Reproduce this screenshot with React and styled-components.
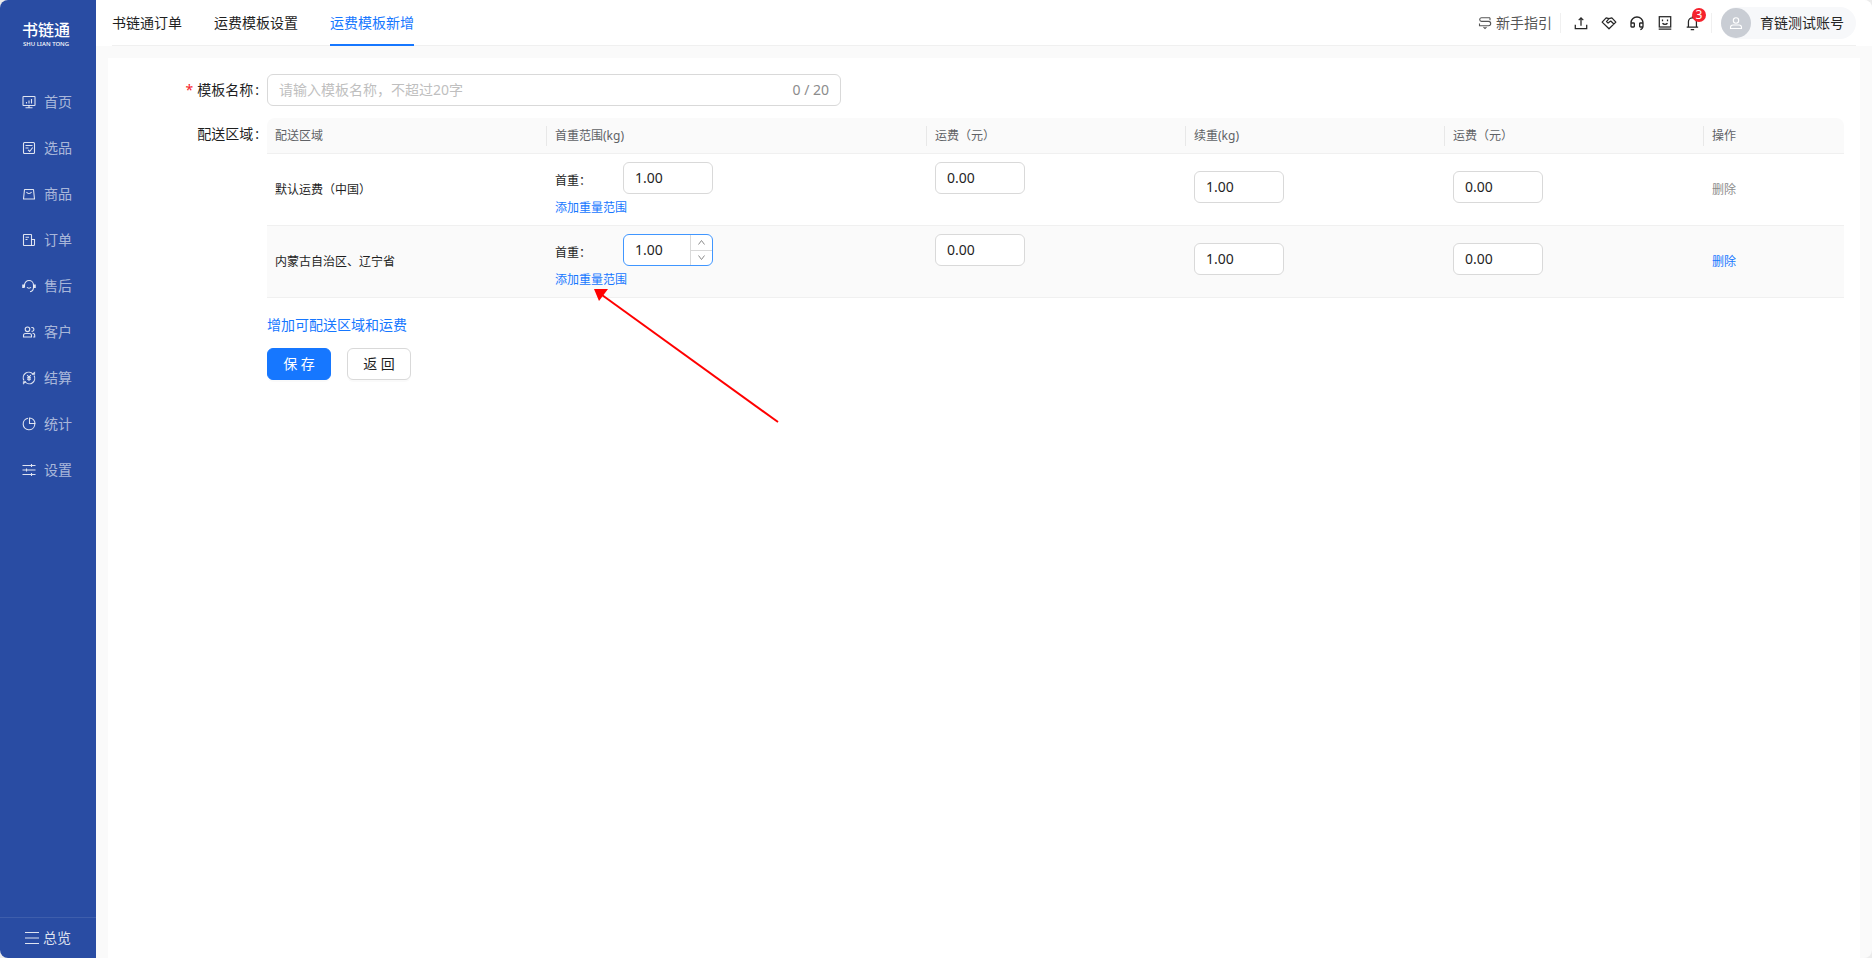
import React, { useState } from 'react';
import styled, { createGlobalStyle } from 'styled-components';
import { RiCustomerServiceLine } from 'react-icons/ri';

const GlobalStyle = createGlobalStyle`
    *, *::before, *::after {
        box-sizing: border-box;
    }
    body {
        margin: 0;
        background: #ececec;
        color: #1f1f1f;
        font-family: "Noto Sans", "Noto Sans CJK SC", sans-serif;
        font-size: 14px;
        line-height: 22px;
    }
    button, input {
        font: inherit;
        color: inherit;
    }
    a {
        text-decoration: none;
    }
`;

const Shell = styled.div`
    display: flex;
    min-height: 100vh;
    border-radius: 8px;
    overflow: hidden;
    background: #fafafa;
`;

/* sidebar */

const Sidebar = styled.aside`
    display: flex;
    flex-direction: column;
    flex: none;
    width: 96px;
    background: #294ca3;
`;

const Brand = styled.div`
    height: 79px;
    padding: 20px 4px 0 0;
    text-align: center;
    color: #fff;
`;

const BrandName = styled.div`
    font-size: 16px;
    font-weight: 500;
    line-height: 21px;
`;

const BrandSub = styled.div`
    font-size: 6px;
    font-weight: 500;
    line-height: 6px;
`;

const Menu = styled.nav`
    display: flex;
    flex-direction: column;
    flex: 1;
`;

const MenuItem = styled.a`
    display: flex;
    align-items: center;
    gap: 8px;
    height: 46px;
    padding-left: 22px;
    color: rgba(255, 255, 255, 0.62);

    svg {
        color: rgba(255, 255, 255, 0.85);
    }
`;

const Overview = styled.button`
    display: flex;
    align-items: center;
    gap: 4px;
    height: 41px;
    padding: 0 0 0 25px;
    border: 0;
    border-top: 1px solid #3e5eac;
    background: none;
    color: rgba(255, 255, 255, 0.85);
`;

/* top bar */

const Main = styled.div`
    display: flex;
    flex-direction: column;
    flex: 1;
    min-width: 0;
`;

const TopBar = styled.header`
    padding: 0 16px;
    background: #fff;
`;

const TopBarInner = styled.div`
    display: flex;
    justify-content: space-between;
    height: 46px;
    border-bottom: 1px solid #f0f0f0;
`;

const Tabs = styled.nav`
    display: flex;
    gap: 32px;
`;

const Tab = styled.a`
    height: 46px;
    padding-top: 12px;
    color: ${({ $active }) => ($active ? '#1677ff' : '#1f1f1f')};
    border-bottom: 2px solid ${({ $active }) => ($active ? '#1677ff' : 'transparent')};
`;

const Tools = styled.div`
    display: flex;
    align-items: center;
`;

const Guide = styled.a`
    display: flex;
    align-items: center;
    gap: 4px;
    padding-right: 8px;
    color: #555;
`;

const Divider = styled.span`
    width: 1px;
    height: 20px;
    background: #f0f0f0;
`;

const ToolList = styled.div`
    display: flex;
    gap: 12px;
    padding: 0 10px 0 12px;
`;

const ToolButton = styled.button`
    position: relative;
    display: flex;
    padding: 0;
    border: 0;
    background: none;
    color: #262626;
`;

const Badge = styled.span`
    position: absolute;
    top: -7px;
    right: -5px;
    width: 14px;
    height: 14px;
    border-radius: 7px;
    background: #f5222d;
    color: #fff;
    font-size: 12px;
    line-height: 14px;
    text-align: center;
`;

const Account = styled.button`
    display: flex;
    align-items: center;
    gap: 9px;
    height: 32px;
    margin-left: 9px;
    padding: 0 12px 0 0;
    border: 0;
    border-radius: 16px;
    background: #f7f8fa;
    color: #262626;
`;

const Avatar = styled.span`
    display: flex;
    align-items: center;
    justify-content: center;
    width: 30px;
    height: 30px;
    border-radius: 50%;
    background: #c9cdd4;
    color: #fff;
`;

/* form */

const Panel = styled.main`
    position: relative;
    flex: 1;
    margin: 12px 12px 0;
    padding: 16px 16px 40px 0;
    background: #fff;
`;

const Field = styled.div`
    display: flex;
    gap: 8px;
    margin-bottom: 12px;
`;

const FieldLabel = styled.label`
    flex: none;
    width: 151px;
    line-height: 32px;
    text-align: right;

    &::before {
        content: ${({ $required }) => ($required ? '"*"' : 'none')};
        margin-right: 4px;
        color: #f5222d;
    }
`;

const Colon = styled.span`
    margin-left: 2px;
`;

const FieldBody = styled.div`
    flex: 1;
    min-width: 0;
`;

const NameBox = styled.div`
    display: flex;
    align-items: center;
    width: 574px;
    height: 32px;
    padding: 0 11px;
    border: 1px solid #d9d9d9;
    border-radius: 6px;
    color: #8c8c8c;
`;

const NameInput = styled.input`
    flex: 1;
    min-width: 0;
    padding: 0;
    border: 0;
    outline: 0;
    color: #1f1f1f;

    &::placeholder {
        color: #bfbfbf;
    }
`;

const Table = styled.table`
    width: 100%;
    table-layout: fixed;
    border-collapse: separate;
    border-spacing: 0;
    font-size: 12px;
`;

const HeadCell = styled.th`
    position: relative;
    height: 36px;
    padding: 0 8px;
    border-bottom: 1px solid #f0f0f0;
    background: #fafafa;
    color: #606266;
    font-weight: 400;
    text-align: left;

    &:first-child {
        border-top-left-radius: 8px;
    }
    &:last-child {
        border-top-right-radius: 8px;
    }
    &:not(:last-child)::after {
        content: "";
        position: absolute;
        top: 8px;
        right: 0;
        width: 1px;
        height: 20px;
        background: #e8e8e8;
    }
`;

const Row = styled.tr`
    background: ${({ $hover }) => ($hover ? '#fafafa' : '#fff')};
`;

const Cell = styled.td`
    height: 72px;
    padding: 8px 8px ${({ $top }) => ($top ? '6px' : '8px')};
    border-bottom: 1px solid #f0f0f0;
    vertical-align: ${({ $top }) => ($top ? 'top' : 'middle')};
`;

const WeightLine = styled.div`
    display: flex;
    margin-bottom: 3px;
`;

const WeightLabel = styled.label`
    width: 68px;
    padding-top: 8px;
`;

const NumberBox = styled.div`
    display: flex;
    width: 90px;
    height: 32px;
    margin-bottom: ${({ $gap }) => ($gap ? '6px' : '0')};
    border: 1px solid ${({ $focused }) => ($focused ? '#4096ff' : '#d9d9d9')};
    border-radius: 6px;
    background: #fff;
    overflow: hidden;
`;

const NumberInput = styled.input`
    flex: 1;
    min-width: 0;
    padding: 0 11px;
    border: 0;
    outline: 0;
    background: none;
    font-size: 14px;
`;

const Stepper = styled.div`
    display: flex;
    flex-direction: column;
    width: 22px;
    border-left: 1px solid #d9d9d9;
`;

const StepButton = styled.button`
    display: flex;
    align-items: center;
    justify-content: center;
    flex: 1;
    padding: 0;
    border: 0;
    background: none;
    color: #8c8c8c;

    & + & {
        border-top: 1px solid #d9d9d9;
    }
`;

const LinkButton = styled.button`
    display: block;
    padding: 0;
    border: 0;
    background: none;
    color: #1677ff;

    &:disabled {
        color: #8c8c8c;
    }
`;

const AddRegion = styled.div`
    padding: 16px 0 12px;
`;

const Actions = styled.div`
    display: flex;
    gap: 16px;
`;

const Button = styled.button`
    width: 64px;
    height: 32px;
    padding: 0;
    border: 1px solid ${({ $primary }) => ($primary ? '#1677ff' : '#d9d9d9')};
    border-radius: 6px;
    background: ${({ $primary }) => ($primary ? '#1677ff' : '#fff')};
    color: ${({ $primary }) => ($primary ? '#fff' : '#1f1f1f')};
    box-shadow: 0 2px 0 rgba(0, 0, 0, 0.02);
`;

const Pointer = styled.svg`
    position: absolute;
    top: 228px;
    left: 484px;
    pointer-events: none;
`;

const Icon = ({ size = 14, children }) => (
    <svg width={size} height={size} viewBox="0 0 14 14" fill="none" stroke="currentColor" strokeWidth="1.1" aria-hidden="true">
        {children}
    </svg>
);

const menu = [
    { label: '首页', icon: <><rect x="1" y="1.5" width="12" height="9" rx="0.6" /><path d="M4.5 8.5V7M7 8.5V5.5M9.5 8.5V4M7 10.5v2M3.5 12.8h7" /></> },
    { label: '选品', icon: <><rect x="1.5" y="1.5" width="11" height="11" rx="1" /><path d="M3.5 4.5h7M3.5 7h3M6 8.8l1.7 1.7 3-4" /></> },
    { label: '商品', icon: <><path d="M2.5 2.5h9l1 9.5h-11z" strokeLinejoin="round" /><path d="M4.5 5c1 2 4 2 5 0" /></> },
    { label: '订单', icon: <><path d="M9.5 12.5H2a.5.5 0 0 1-.5-.5V2a.5.5 0 0 1 .5-.5h7a.5.5 0 0 1 .5.5z" /><path d="M9.5 6.5h3v5a1 1 0 0 1-1 1h-2M3.5 4.2h3.5M3.5 6.5h2" /></> },
    { label: '售后', icon: <><path d="M2.5 8.5V6a4.5 4.5 0 0 1 9 0v2.5c0 2-1 3.7-3.5 4.2" /><path d="M1.3 5.5v3.5M12.7 5.5v3.5" strokeWidth="2.2" /><path d="M5 8.3c.8 1.2 3.2 1.2 4 0" /></> },
    { label: '客户', icon: <><circle cx="5.5" cy="4.3" r="2.3" /><path d="M1.5 12v-1.5c0-1.3 1-2 2-2h4c1 0 2 .7 2 2V12z" /><path d="M9.3 2.6a1.9 1.9 0 1 1 .2 3.6M10.5 8.3c1.3 0 2.2.8 2.2 2V12h-1.5" /></> },
    { label: '结算', icon: <><path d="M2 9.5A5.5 5.5 0 0 1 10.8 3M12 4.5A5.5 5.5 0 0 1 3.2 11" /><path d="M10 3.5h2.7V.8zM4 10.5H1.3v2.7z" fill="currentColor" strokeWidth="0.5" /><path d="M5.2 4L7 6.3 8.8 4M7 6.3V10M5 6.7h4M5 8.3h4" /></> },
    { label: '统计', icon: <><path d="M6 1.3A5.8 5.8 0 1 0 12.7 8" /><path d="M7.5 1v5.5H13A5.5 5.5 0 0 0 7.5 1z" /><path d="M12.7 8V6.5" /></> },
    { label: '设置', icon: <path d="M.5 2.5h13M.5 7h13M.5 11.5h13M9.5 1v3M4.5 5.5v3M9.5 10v3" /> },
];

const tools = [
    { label: '上传', icon: <Icon size={16}><path d="M7 9.5V2.5M5 4.5l2-2 2 2M2 8.5v3.5h10V8.5" /></Icon> },
    { label: '合作', icon: <Icon size={16}><path d="M7 3.2L4.5 2.5 1 6.2l6 5.8 6-5.8-3.5-3.7L7 3.2 4.8 5.8l1.4 1.3 2.3-1.8 2.8 2.6" strokeLinejoin="round" /></Icon> },
    { label: '客服', icon: <RiCustomerServiceLine size={16} /> },
    { label: '反馈', icon: <Icon size={16}><rect x="2" y="1.5" width="10" height="9" /><path d="M4.8 4v1.5M9.2 4v1.5M4.8 7.2c1 1.2 3.4 1.2 4.4 0M1.5 12.3h11" /></Icon> },
    { label: '消息', icon: <Icon size={16}><path d="M1.5 10.7h10M3 10.7V6a3.5 3.5 0 0 1 7 0v4.7M6.5 2.5V1.2M5 12.7h3" /></Icon>, badge: 3 },
];

const regions = [
    { name: '默认运费（中国）', locked: true },
    { name: '内蒙古自治区、辽宁省', focused: true },
];

const NumberField = ({ id, label, value, focused, gap }) => (
    <NumberBox $focused={focused} $gap={gap}>
        <NumberInput id={id} aria-label={label} defaultValue={value} />
        {focused && (
            <Stepper>
                <StepButton aria-label="增加">
                    <svg width="7" height="5" viewBox="0 0 7 5" fill="none" stroke="currentColor"><path d="M.5 4.5l3-4 3 4" /></svg>
                </StepButton>
                <StepButton aria-label="减少">
                    <svg width="7" height="5" viewBox="0 0 7 5" fill="none" stroke="currentColor"><path d="M.5.5l3 4 3-4" /></svg>
                </StepButton>
            </Stepper>
        )}
    </NumberBox>
);

const RegionRow = ({ region, index }) => (
    <Row $hover={region.focused}>
        <Cell>{region.name}</Cell>
        <Cell $top>
            <WeightLine>
                <WeightLabel htmlFor={`weight-${index}`}>首重：</WeightLabel>
                <NumberField id={`weight-${index}`} value="1.00" focused={region.focused} />
            </WeightLine>
            <LinkButton>添加重量范围</LinkButton>
        </Cell>
        <Cell $top><NumberField label="首重运费" value="0.00" /></Cell>
        <Cell><NumberField label="续重" value="1.00" gap /></Cell>
        <Cell><NumberField label="续重运费" value="0.00" gap /></Cell>
        <Cell><LinkButton disabled={region.locked}>删除</LinkButton></Cell>
    </Row>
);

const App = () => {
    const [name, setName] = useState('');

    return (
        <>
            <GlobalStyle />
            <Shell>
                <Sidebar>
                    <Brand>
                        <BrandName>书链通</BrandName>
                        <BrandSub>SHU LIAN TONG</BrandSub>
                    </Brand>
                    <Menu>
                        {menu.map((item) => (
                            <MenuItem key={item.label} href="#">
                                <Icon>{item.icon}</Icon>
                                {item.label}
                            </MenuItem>
                        ))}
                    </Menu>
                    <Overview>
                        <Icon><path d="M0 1.5h14M0 7h14M0 12.5h14" /></Icon>
                        总览
                    </Overview>
                </Sidebar>
                <Main>
                    <TopBar>
                        <TopBarInner>
                            <Tabs>
                                <Tab href="#">书链通订单</Tab>
                                <Tab href="#">运费模板设置</Tab>
                                <Tab href="#" $active>运费模板新增</Tab>
                            </Tabs>
                            <Tools>
                                <Guide href="#">
                                    <Icon>
                                        <path d="M12 1.8H3.5a1.8 1.8 0 0 0 0 3.6h7a2.2 2.2 0 0 1 0 4.4H1.5V7.6M12 1.8v2.4M3.5 5.4h7M5.5 11.2l1.5 1.3 1.5-1.3" />
                                    </Icon>
                                    新手指引
                                </Guide>
                                <Divider />
                                <ToolList>
                                    {tools.map((tool) => (
                                        <ToolButton key={tool.label} aria-label={tool.label}>
                                            {tool.icon}
                                            {tool.badge && <Badge>{tool.badge}</Badge>}
                                        </ToolButton>
                                    ))}
                                </ToolList>
                                <Divider />
                                <Account>
                                    <Avatar>
                                        <Icon><circle cx="7" cy="4.5" r="2.7" /><path d="M1.5 12.5v-1c0-1.6 1.2-2.5 2.5-2.5h6c1.3 0 2.5.9 2.5 2.5v1z" /></Icon>
                                    </Avatar>
                                    育链测试账号
                                </Account>
                            </Tools>
                        </TopBarInner>
                    </TopBar>
                    <Panel>
                        <Field>
                            <FieldLabel htmlFor="template-name" $required>模板名称<Colon>:</Colon></FieldLabel>
                            <FieldBody>
                                <NameBox>
                                    <NameInput
                                        id="template-name"
                                        maxLength={20}
                                        placeholder="请输入模板名称，不超过20字"
                                        value={name}
                                        onChange={(e) => setName(e.target.value)}
                                    />
                                    {`${name.length} / 20`}
                                </NameBox>
                            </FieldBody>
                        </Field>
                        <Field>
                            <FieldLabel as="span">配送区域<Colon>:</Colon></FieldLabel>
                            <FieldBody>
                                <Table>
                                    <colgroup>
                                        <col width="280" />
                                        <col width="380" />
                                        <col />
                                        <col />
                                        <col />
                                        <col width="140" />
                                    </colgroup>
                                    <thead>
                                        <tr>
                                            <HeadCell>配送区域</HeadCell>
                                            <HeadCell>首重范围(kg)</HeadCell>
                                            <HeadCell>运费（元）</HeadCell>
                                            <HeadCell>续重(kg)</HeadCell>
                                            <HeadCell>运费（元）</HeadCell>
                                            <HeadCell>操作</HeadCell>
                                        </tr>
                                    </thead>
                                    <tbody>
                                        {regions.map((region, i) => (
                                            <RegionRow key={region.name} region={region} index={i} />
                                        ))}
                                    </tbody>
                                </Table>
                                <AddRegion>
                                    <LinkButton>增加可配送区域和运费</LinkButton>
                                </AddRegion>
                                <Actions>
                                    <Button $primary>保 存</Button>
                                    <Button>返 回</Button>
                                </Actions>
                            </FieldBody>
                        </Field>
                        <Pointer width="192" height="140" viewBox="0 0 192 140" aria-hidden="true">
                            <path d="M10 9L186 136" stroke="#f00" strokeWidth="2" />
                            <path d="M2 3h14l-9 12z" fill="#f00" />
                        </Pointer>
                    </Panel>
                </Main>
            </Shell>
        </>
    );
};

export default App;
